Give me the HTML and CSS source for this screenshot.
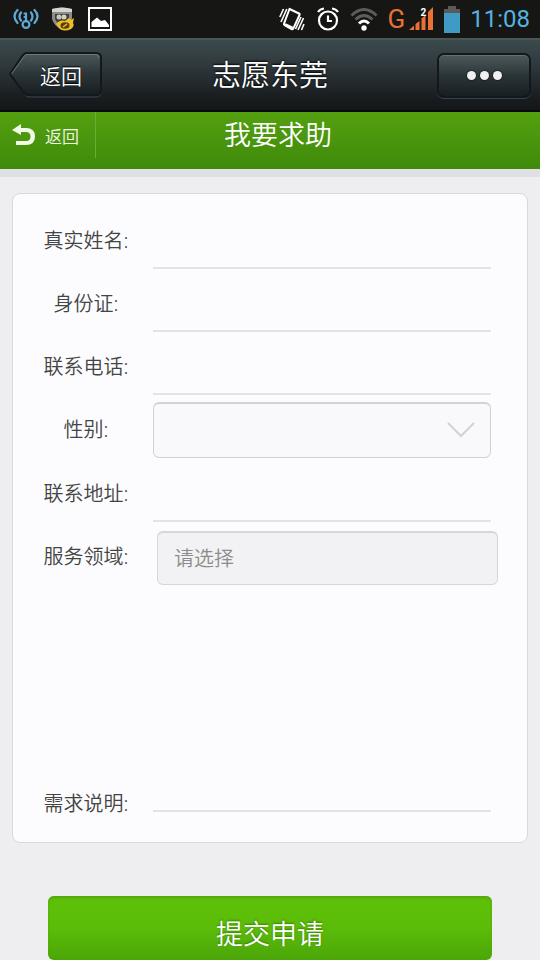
FILE: index.html
```html
<!DOCTYPE html>
<html lang="zh-CN">
<head>
<meta charset="utf-8">
<meta name="viewport" content="width=device-width, initial-scale=1">
<title>志愿东莞</title>
<link rel="stylesheet" href="styles.css">
</head>
<body>
<div class="status">
  <div class="status-group notices">
    <svg width="26" height="24" viewBox="0 0 26 24" fill="none" stroke="#5fa9d6" stroke-width="2.2" stroke-linecap="round">
      <path d="M4.500 3Q-1.500 9 4.500 16M8 5.500Q5 9.500 8 13.500M21.500 3Q27.500 9 21.500 16M18 5.500Q21 9.500 18 13.500"/>
      <path d="M13 14V6.500H11.500M13 10H11.500"/><circle cx="13" cy="17.500" r="3.400"/>
    </svg>
    <svg width="25" height="26" viewBox="0 0 25 26">
      <path d="M1 3Q11 0 21 3V13Q19 20 11 24Q3 20 1 13Z" fill="#8c8c88"/>
      <path d="M1 3Q11 0 21 3V6H1Z" fill="#d4d4d0"/>
      <path d="M4 8H18V13Q16 18 11 20Q6 18 4 13Z" fill="#40403c"/>
      <circle cx="8" cy="11" r="2.500" fill="#c8c8c0"/><circle cx="13" cy="11" r="2.500" fill="#d8d0b0"/>
      <path d="M5 18Q9 13 14 15L18 12L20 14L23 12L22 17Q24 20 20 23Q14 26 9 23Z" fill="#f2bd22"/>
      <ellipse cx="14" cy="19.500" rx="4.500" ry="3.200" fill="#54400f"/><path d="M12 21L16 18" stroke="#f2bd22" stroke-width="1.500"/>
    </svg>
    <svg width="24" height="24" viewBox="0 0 24 24">
      <rect x="1" y="1" width="22" height="22" fill="none" stroke="#fff" stroke-width="2"/>
      <path d="M3.500 20V15L9 10.500L13 14L17 13L21 18V20Z" fill="#fff"/>
    </svg>
  </div>
  <div class="status-group">
    <svg width="26" height="24" viewBox="0 0 26 24" fill="none" stroke="#fff" stroke-width="1.800">
      <path d="M10.500 2L20 6.500Q21 7 20.500 8L14.500 21Q14 22.500 12.500 22L6 18.500Q4.500 17.500 5 16.500Z" stroke-width="2"/>
      <path d="M6 17.500L13.500 21" stroke-width="3"/>
      <path d="M4.500 2L.8 10M7.800 2L2 15M24.500 11L19 23M25 17L22.500 23M22 10L16.500 22" stroke-width="1.600"/>
    </svg>
    <svg class="alarm" width="22" height="24" viewBox="0 0 22 24" fill="none" stroke="#fff" stroke-width="2.200">
      <circle cx="11" cy="13.500" r="9"/><path d="M11 8.500V14H15M1 5Q3 2 7 1.500M21 5Q19 2 15 1.500"/>
    </svg>
    <svg class="wifi" width="28" height="24" viewBox="0 0 28 24" fill="none" stroke-width="3">
      <path d="M1.500 8.500Q14-3.500 26.500 8.500M5.500 12.500Q14 4.500 22.500 12.500" stroke="#5d5d5d"/>
      <path d="M9 16.500Q14 11.500 19 16.500" stroke="#fff"/><circle cx="14" cy="21" r="2.700" fill="#fff"/>
    </svg>
    <span class="network">G</span>
    <svg class="signal" width="25" height="24" viewBox="0 0 25 24">
      <path d="M0 23L5 18.500V23ZM6.500 23V17L10.500 14V23ZM12.500 23V11.500L16.500 8V23ZM19 23V5L24 0V23Z" fill="#ea7033"/>
      <text x="11.500" y="9" class="sim">2</text>
    </svg>
    <svg class="battery" width="16" height="27" viewBox="0 0 16 27">
      <path d="M4 0H12V3H16V7H0V3H4Z" fill="#5a5a58"/><path d="M0 7H16V27H0Z" fill="#3f9ac6"/>
    </svg>
    <time class="clock">11:08</time>
  </div>
</div>

<header class="appbar">
  <button class="app-back" type="button">
    <svg class="app-back-shape" viewBox="0 0 94 46" aria-hidden="true">
      <defs><linearGradient id="steel" x1="0" y1="0" x2="0" y2="1"><stop offset="0" stop-color="#4c595c"/><stop offset=".5" stop-color="#2b3538"/><stop offset="1" stop-color="#181e21"/></linearGradient></defs>
      <path d="M19 2.500H87Q92 2.500 92 7V40Q92 45 87 45H20Q17 45 15 42L2 23" fill="none" stroke="#3c4446"/>
      <path d="M18 1H87Q92 1 92 6V38Q92 43 87 43H19Q17 43 15 41L1 22L14 3Q16 1 18 1Z" fill="url(#steel)" stroke="#11191d" stroke-width="2"/>
      <path d="M2.500 22L15 4.500Q16 2.500 18 2.500H87Q90 2.500 90 6" fill="none" stroke="#6d787a"/>
    </svg>
    <span class="app-back-text">返回</span>
  </button>
  <h1 class="app-title">志愿东莞</h1>
  <button class="more" type="button" aria-label="更多"><i></i><i></i><i></i></button>
</header>

<div class="pagebar">
  <a class="page-back" href="#">
    <svg width="24" height="22" viewBox="0 0 24 22"><path d="M0 6L9 0V4H14Q23 4 23 12.500Q23 21 14 21H4V17H14Q18.500 17 18.500 12.500Q18.500 8 14 8H9V11Z" fill="#f1fae6"/></svg>
    <span>返回</span>
  </a>
  <h2 class="page-title">我要求助</h2>
</div>

<form class="form">
  <div class="card">
    <div class="row"><label for="name">真实姓名:</label><input class="line" id="name" type="text"></div>
    <div class="row"><label for="idcard">身份证:</label><input class="line" id="idcard" type="text"></div>
    <div class="row"><label for="phone">联系电话:</label><input class="line" id="phone" type="tel"></div>
    <div class="row">
      <label for="gender">性别:</label>
      <div class="select-wrap">
        <select id="gender"><option></option><option>男</option><option>女</option></select>
        <svg class="chevron" width="28" height="16" viewBox="0 0 28 16"><path d="M1 1L14 14L27 1" fill="none" stroke="#d2d2d6" stroke-width="2"/></svg>
      </div>
    </div>
    <div class="row row-wide"><label for="address">联系地址:</label><input class="line" id="address" type="text"></div>
    <div class="row"><label for="area">服务领域:</label><input class="picker" id="area" type="text" placeholder="请选择" readonly></div>
    <div class="row row-tall"><label for="detail">需求说明:</label><textarea class="line" id="detail"></textarea></div>
  </div>
  <button class="submit" type="submit">提交申请</button>
</form>
</body>
</html>
```
FILE: styles.css
```css
* { box-sizing: border-box; }

body {
  margin: 0;
  background: #eeeef0;
  color: #444;
  font-family: "Noto Sans", "Noto Sans CJK SC", sans-serif;
  font-size: 20px;
  font-weight: 350;
}

button, input, select, textarea {
  font: inherit;
  color: inherit;
}

svg { display: block; flex: none; }

/* System status bar */
.status {
  display: flex;
  justify-content: space-between;
  align-items: center;
  height: 38px;
  padding: 0 10px 0 13px;
  background: #161714;
  font-family: Roboto, sans-serif;
}

.status-group { display: flex; align-items: center; }
.notices { gap: 12px; }
.alarm { margin-left: 12px; }
.wifi { margin-left: 11px; }

.network {
  margin-left: 10px;
  color: #ea7033;
  font-size: 26px;
  font-weight: 400;
  line-height: 38px;
}

.signal { margin-left: 4px; }
.sim { fill: #fff; font: bold 10px Roboto, sans-serif; }
.battery { margin-left: 10px; }

.clock {
  margin-left: 10px;
  color: #56b2e2;
  font-size: 24px;
  font-weight: 400;
  line-height: 38px;
}

/* Application bar */
.appbar {
  display: grid;
  grid-template-columns: 1fr auto 1fr;
  align-items: center;
  height: 74px;
  padding: 0 9px;
  background: linear-gradient(#3b4a4d, #30393d 35%, #1a1e21 80%, #14171a);
  border-top: 2px solid #4b5557;
  border-bottom: 2px solid #080a08;
}

.app-back {
  position: relative;
  width: 94px;
  height: 46px;
  padding: 0 0 0 10px;
  border: 0;
  background: none;
  color: #fff;
}

.app-back-shape { position: absolute; inset: 0; }
.app-back-text { position: relative; font-size: 21px; text-shadow: 0 -1px 1px #000; }

.app-title {
  margin: 0;
  color: #fff;
  font-size: 29px;
  font-weight: 350;
  line-height: 44px;
  text-shadow: 0 -1px 2px #000;
}

.more {
  display: flex;
  justify-content: center;
  align-items: center;
  justify-self: end;
  gap: 4px;
  width: 94px;
  height: 45px;
  padding: 0;
  border: 2px solid #11191d;
  border-radius: 7px;
  background: linear-gradient(#4c595c, #2b3538 50%, #181e21);
  box-shadow: inset 0 1px #657073, 0 1px #3c4446;
}

.more i {
  width: 9px;
  height: 9px;
  border-radius: 50%;
  background: #f0f0f2;
  box-shadow: 0 0 2px #000;
}

/* Page bar */
.pagebar {
  display: grid;
  grid-template-columns: 1fr auto 1fr;
  align-items: start;
  height: 65px;
  background: linear-gradient(#54a010, #3f8a0a);
  border-bottom: 8px solid #dee0e5;
}

.page-back {
  display: flex;
  align-items: center;
  gap: 9px;
  width: 96px;
  height: 46px;
  padding-left: 12px;
  border-right: 1px solid #69ad35;
  color: #f1fae6;
  font-size: 17px;
  text-decoration: none;
}

.page-title {
  margin: 0;
  padding-left: 16px;
  color: #fff;
  font-size: 27px;
  font-weight: 350;
  line-height: 46px;
}

/* Request form */
.form { padding: 16px 12px 0; }

.card {
  padding: 12px 36px 30px 29px;
  border: 1px solid #d8d8dc;
  border-radius: 8px;
  background: #fcfcfe;
}

.row {
  display: grid;
  grid-template-columns: 88px 1fr;
  column-gap: 23px;
  align-items: end;
  height: 63px;
}

.row label {
  padding-bottom: 12px;
  line-height: 32px;
  text-align: center;
}

.line {
  display: block;
  width: 100%;
  height: 48px;
  padding: 0 8px;
  border: 0;
  border-bottom: 2px solid #e3e3e6;
  border-radius: 0;
  outline: 0;
  background: transparent;
}

.select-wrap { position: relative; }

.select-wrap select {
  display: block;
  width: 100%;
  height: 56px;
  padding: 0 48px 0 16px;
  border: 1px solid #d2d2d5;
  border-top-width: 2px;
  border-radius: 6px;
  background: #f9f9fb;
  appearance: none;
}

.chevron {
  position: absolute;
  top: 20px;
  right: 16px;
  pointer-events: none;
}

.picker {
  height: 54px;
  margin: 0 -7px 0 4px;
  padding: 0 16px;
  border: 1px solid #d6d6d9;
  border-top-width: 2px;
  border-radius: 6px;
  background: #f2f2f4;
}

.picker::placeholder { color: #8c8c8c; opacity: 1; }

.row-wide { height: 64px; }
.row-tall { height: 227px; }
.row-tall label { padding: 0; margin-bottom: -8px; }
.row-tall textarea { height: 200px; resize: none; }

.submit {
  display: block;
  width: calc(100% - 72px);
  height: 64px;
  margin: 53px auto 0;
  padding: 8px 0 0;
  border: 0;
  border-radius: 6px;
  background: linear-gradient(#5fc108, #5cbc09 50%, #4aa608);
  box-shadow: inset 0 2px 3px #55a510;
  color: #fff;
  font-size: 27px;
  text-shadow: 0 -1px 2px #3b7c08;
}
```
